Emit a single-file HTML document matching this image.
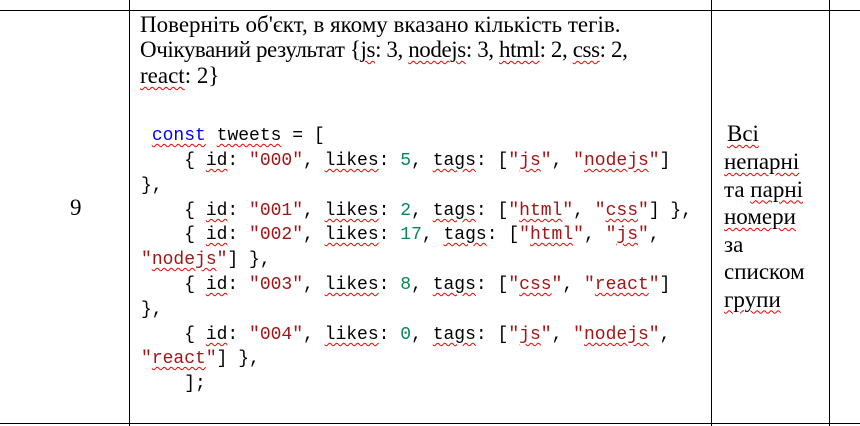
<!DOCTYPE html>
<html><head><meta charset="utf-8"><style>
body{margin:0;width:860px;height:426px;background:#fff;position:relative;overflow:hidden}
.l{position:absolute;background:#000}
.s{position:absolute;font-family:"Liberation Serif",serif;font-size:23px;line-height:25px;color:#000;white-space:nowrap}
.c{position:absolute;left:141px;font-family:"Liberation Mono",monospace;font-size:18px;line-height:25px;white-space:pre;color:#000}
.w{text-decoration:underline wavy #e00;text-decoration-thickness:1px;text-underline-offset:3px}
.k{color:#0000ff}.r{color:#a31515}.n{color:#098658}
</style></head><body>
<div class="l" style="left:0;top:10px;width:860px;height:1px"></div>
<div class="l" style="left:0;top:423px;width:860px;height:1px"></div>
<div class="l" style="left:129px;top:0;width:1px;height:426px"></div>
<div class="l" style="left:711px;top:0;width:1px;height:426px"></div>
<div class="l" style="left:829px;top:0;width:1px;height:426px"></div>

<div class="s" style="left:70px;top:195px">9</div>

<div class="s" style="left:140px;top:12px">Поверніть об'єкт, в якому вказано кількість тегів.</div>
<div class="s" style="left:140px;top:37px;letter-spacing:-0.4px">Очікуваний результат {<span class="w">js</span>: 3, <span class="w">nodejs</span>: 3, <span class="w">html</span>: 2, <span class="w">css</span>: 2,</div>
<div class="s" style="left:140px;top:63px"><span class="w">react</span>: 2}</div>

<div class="c" style="top:124px"> <span class="k w">const</span> <span class="w">tweets</span> = [</div>
<div class="c" style="top:149px">    { <span class="w">id</span>: <span class="r">"000"</span>, <span class="w">likes</span>: <span class="n">5</span>, <span class="w">tags</span>: [<span class="r">"<span class="w">js</span>"</span>, <span class="r">"<span class="w">nodejs</span>"</span>]</div>
<div class="c" style="top:174px">},</div>
<div class="c" style="top:199px">    { <span class="w">id</span>: <span class="r">"001"</span>, <span class="w">likes</span>: <span class="n">2</span>, <span class="w">tags</span>: [<span class="r">"<span class="w">html</span>"</span>, <span class="r">"<span class="w">css</span>"</span>] },</div>
<div class="c" style="top:223px">    { <span class="w">id</span>: <span class="r">"002"</span>, <span class="w">likes</span>: <span class="n">17</span>, <span class="w">tags</span>: [<span class="r">"<span class="w">html</span>"</span>, <span class="r">"<span class="w">js</span>"</span>,</div>
<div class="c" style="top:248px"><span class="r">"<span class="w">nodejs</span>"</span>] },</div>
<div class="c" style="top:273px">    { <span class="w">id</span>: <span class="r">"003"</span>, <span class="w">likes</span>: <span class="n">8</span>, <span class="w">tags</span>: [<span class="r">"<span class="w">css</span>"</span>, <span class="r">"<span class="w">react</span>"</span>]</div>
<div class="c" style="top:298px">},</div>
<div class="c" style="top:323px">    { <span class="w">id</span>: <span class="r">"004"</span>, <span class="w">likes</span>: <span class="n">0</span>, <span class="w">tags</span>: [<span class="r">"<span class="w">js</span>"</span>, <span class="r">"<span class="w">nodejs</span>"</span>,</div>
<div class="c" style="top:347px"><span class="r">"<span class="w">react</span>"</span>] },</div>
<div class="c" style="top:372px">    ];</div>

<div class="s" style="left:727px;top:121px">
<span class="w">Всі</span></div>
<div class="s" style="left:724px;top:148px;line-height:27.5px">
<span class="w">непарні</span><br>та <span class="w">парні</span><br><span class="w">номери</span><br>за<br>списком<br><span class="w">групи</span></div>
</body></html>
